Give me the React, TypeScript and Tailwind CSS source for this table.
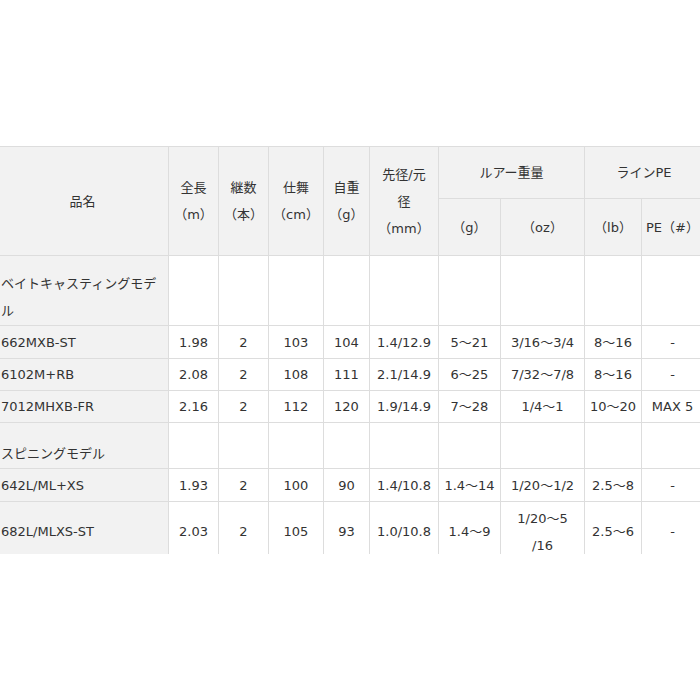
const font = { fontFamily: '"DejaVu Sans", "Noto Sans CJK JP", sans-serif' };

type Row = {
  name: string;
  cells: React.ReactNode[];
  h: string;
};

const baitRows: Row[] = [
  { name: "662MXB-ST", h: "h-[33px]", cells: ["1.98", "2", "103", "104", "1.4/12.9", "5～21", "3/16～3/4", "8～16", "-"] },
  { name: "6102M+RB", h: "h-[32px]", cells: ["2.08", "2", "108", "111", "2.1/14.9", "6～25", "7/32～7/8", "8～16", "-"] },
  { name: "7012MHXB-FR", h: "h-[32px]", cells: ["2.16", "2", "112", "120", "1.9/14.9", "7～28", "1/4～1", "10～20", "MAX 5"] },
];

const spinRows: Row[] = [
  { name: "642L/ML+XS", h: "h-[33px]", cells: ["1.93", "2", "100", "90", "1.4/10.8", "1.4～14", "1/20～1/2", "2.5～8", "-"] },
  {
    name: "682L/MLXS-ST",
    h: "h-[60px]",
    cells: [
      "2.03",
      "2",
      "105",
      "93",
      "1.0/10.8",
      "1.4～9",
      <>
        1/20～5
        <br />
        /16
      </>,
      "2.5～6",
      "-",
    ],
  },
];

const widths = [172, 50, 50, 55, 46, 69, 62, 84, 57, 62];

function SectionRow({ label, height }: { label: string; height: string }) {
  return (
    <tr className={height}>
      <td className="border border-[#ddd] bg-[#f2f2f2] pl-[4px] pr-[6px] pb-[1px] text-left align-bottom">
        {label}
      </td>
      {widths.slice(1).map((_, i) => (
        <td key={i} className="border border-[#ddd] bg-white" />
      ))}
    </tr>
  );
}

function DataRow({ row }: { row: Row }) {
  return (
    <tr className={row.h}>
      <td className="whitespace-nowrap border border-[#ddd] bg-[#f2f2f2] pl-[4px] text-left align-middle">
        {row.name}
      </td>
      {row.cells.map((c, i) => (
        <td key={i} className="whitespace-nowrap border border-[#ddd] bg-white px-[2px] text-center align-middle">
          {c}
        </td>
      ))}
    </tr>
  );
}

const th = "border border-[#ddd] bg-[#f2f2f2] px-[2px] text-center align-middle font-normal whitespace-nowrap";

export default function App() {
  return (
    <div className="h-[700px] w-[700px] overflow-hidden bg-white text-[13px] leading-[27px] text-[#333]" style={font}>
      <div className="mt-[146px] h-[408px] overflow-hidden">
        <table className="-ml-[4px] w-[707px] table-fixed border-collapse">
          <colgroup>
            {widths.map((w, i) => (
              <col key={i} style={{ width: w }} />
            ))}
          </colgroup>
          <thead>
            <tr className="h-[52px]">
              <th rowSpan={2} className={th}>品名</th>
              <th rowSpan={2} className={th}>全長<br />（m）</th>
              <th rowSpan={2} className={th}>継数<br />（本）</th>
              <th rowSpan={2} className={th}>仕舞<br />（cm）</th>
              <th rowSpan={2} className={th}>自重<br />（g）</th>
              <th rowSpan={2} className={th}>先径/元<br />径<br />（mm）</th>
              <th colSpan={2} className={th}>ルアー重量</th>
              <th colSpan={2} className={th}>ラインPE</th>
            </tr>
            <tr className="h-[57px]">
              <th className={th}>（g）</th>
              <th className={th}>（oz）</th>
              <th className={th}>（lb）</th>
              <th className={th}>PE（#）</th>
            </tr>
          </thead>
          <tbody>
            <SectionRow label="ベイトキャスティングモデル" height="h-[70px]" />
            {baitRows.map((r) => (
              <DataRow key={r.name} row={r} />
            ))}
            <SectionRow label="スピニングモデル" height="h-[46px]" />
            {spinRows.map((r) => (
              <DataRow key={r.name} row={r} />
            ))}
          </tbody>
        </table>
      </div>
    </div>
  );
}
